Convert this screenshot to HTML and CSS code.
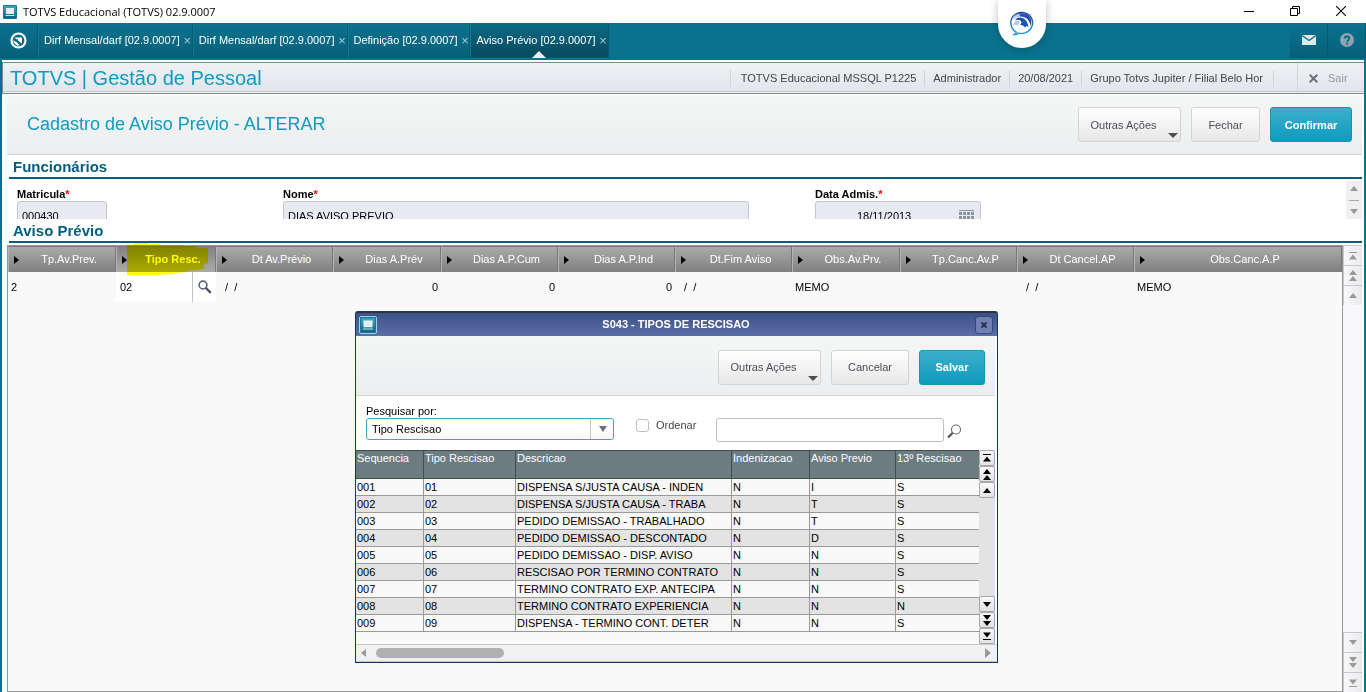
FILE: index.html
```html
<!DOCTYPE html>
<html lang="pt-BR">
<head>
<meta charset="utf-8">
<title>TOTVS Educacional (TOTVS) 02.9.0007</title>
<link rel="stylesheet" href="styles.css">
</head>
<body>
<svg class="defs" aria-hidden="true">
  <defs>
    <linearGradient id="g-app" x1="0" y1="0" x2="0" y2="1"><stop offset="0" stop-color="#3aa9c4"/><stop offset="1" stop-color="#0b6484"/></linearGradient>
    <linearGradient id="g-bubble" x1="0" y1="0" x2="0" y2="1"><stop offset="0" stop-color="#1b3c9c"/><stop offset="1" stop-color="#1aa7dc"/></linearGradient>
  </defs>
  <symbol id="app" viewBox="0 0 14 14"><rect x="0" y="0" width="14" height="14" rx="1" fill="#16799a"/><rect x="1" y="1" width="12" height="12" fill="url(#g-app)"/><rect x="3" y="3" width="8" height="6" fill="#e4edf2"/><path d="M2 11h10l-1-1H3z" fill="#cfe0e8"/></symbol>
  <symbol id="up" viewBox="0 0 8 5"><path d="M4 0l4 5H0z"/></symbol>
  <symbol id="down" viewBox="0 0 8 5"><path d="M4 5L0 0h8z"/></symbol>
  <symbol id="up2" viewBox="0 0 8 11"><path d="M4 0l4 5H0zM4 6l4 5H0z"/></symbol>
  <symbol id="down2" viewBox="0 0 8 11"><path d="M4 5L0 0h8zM4 11L0 6h8z"/></symbol>
  <symbol id="top" viewBox="0 0 8 8"><path d="M0 0h8v1H0zM4 2.500l4 5H0z"/></symbol>
  <symbol id="bottom" viewBox="0 0 8 8"><path d="M0 7h8v1H0zM4 5.500l-4-5h8z"/></symbol>
</svg>

<header class="titlebar">
  <svg class="app-icon"><use href="#app"/></svg>
  <span class="window-title">TOTVS Educacional (TOTVS) 02.9.0007</span>
  <div class="window-controls">
    <button type="button" aria-label="Minimizar"><svg width="10" height="10" viewBox="0 0 10 10"><path d="M0 5.500h10" stroke="#000"/></svg></button>
    <button type="button" aria-label="Restaurar"><svg width="10" height="10" viewBox="0 0 10 10"><path d="M.5 2.500h7v7h-7zM2.500 2.500v-2h7v7h-2" fill="none" stroke="#000"/></svg></button>
    <button type="button" aria-label="Fechar janela"><svg width="10" height="10" viewBox="0 0 10 10"><path d="M0 0l10 10M10 0L0 10" stroke="#000" stroke-width="1.100"/></svg></button>
  </div>
</header>

<nav class="tabbar">
  <a class="home" href="#" aria-label="Início"><svg width="17" height="17" viewBox="0 0 17 17"><circle cx="8.500" cy="8.500" r="7" fill="none" stroke="#fff" stroke-width="2.200"/><path d="M4.500 5.500h6.500c.7 0 1 .3 1 1v5.200L8 8.500V7.300H6.300zM3 8.200l3 1.600 4 3.500-2.500.5L4 11z" fill="#fff"/></svg></a>
  <div class="tab"><a href="#">Dirf Mensal/darf [02.9.0007]</a><button type="button" aria-label="Fechar aba">×</button></div>
  <div class="tab"><a href="#">Dirf Mensal/darf [02.9.0007]</a><button type="button" aria-label="Fechar aba">×</button></div>
  <div class="tab"><a href="#">Definição [02.9.0007]</a><button type="button" aria-label="Fechar aba">×</button></div>
  <div class="tab active"><a href="#">Aviso Prévio [02.9.0007]</a><button type="button" aria-label="Fechar aba">×</button></div>
  <div class="tab-tools">
    <button type="button" aria-label="Mensagens"><svg width="14" height="10" viewBox="0 0 14 10"><path d="M0 0h14v10H0z" fill="#dfeaee"/><path d="M0 .5l7 5 7-5" fill="none" stroke="#0a6b87" stroke-width="1.300"/></svg></button>
    <button type="button" aria-label="Ajuda"><svg width="14" height="14" viewBox="0 0 14 14"><circle cx="7" cy="7" r="7" fill="#8aa5b1"/><path d="M4.800 5.600c0-3 4.500-3 4.500-.3 0 1.500-2.100 1.700-2.100 3.400M7.100 9.700v1.700" fill="none" stroke="#07607a" stroke-width="1.700"/></svg></button>
  </div>
</nav>

<button type="button" class="assistant" aria-label="Assistente"><svg width="24" height="26" viewBox="0 0 26 27"><path d="M7 22.500C-1 18-.5 7.500 5 3.800 11-.8 19.500.8 23 6.500c4 7-.5 16.500-9.500 17.300-1.500.1-3 0-4.200-.4-1.500 1.300-3.500 1.700-5 1.600 1.200-.6 2.200-1.200 2.700-2.500z" fill="#fff" stroke="url(#g-bubble)" stroke-width="1.500"/><path d="M2.500 10C4 3.500 11 .8 17 2.700c5 1.700 7.400 6.800 5.400 13.300C21.500 9 16.500 4.500 10.500 5.300 7 5.800 4 7.800 2.500 10z" fill="#b8c4e6"/><path d="M10 2.200C17 .5 23 4 23 11l-.5 5C21.500 9 17 5 11 5.300z" fill="#2a4fb0"/><path d="M5.500 9c4-5 13-3 14.500 7.500-2-1.200-3-.6-4 .8-1-2-3-3-5.500-2.500 2.500-1.500 2.500-4.500-.5-5.500-1.500-.3-3-.8-4.500-.3z" fill="#1857ad"/><path d="M4 13c2-4 5-3.500 6-2.500 1 1.500-.5 3.500-2 4.300-1.500-.8-3-.8-4.500.7z" fill="#bac6e6"/></svg></button>

<div class="frame">
  <header class="module">
    <h1>TOTVS | Gestão de Pessoal</h1>
    <ul class="session">
      <li>TOTVS Educacional MSSQL P1225</li>
      <li>Administrador</li>
      <li>20/08/2021</li>
      <li>Grupo Totvs Jupiter / Filial Belo Hor</li>
    </ul>
    <a class="exit" href="#"><svg width="9" height="9" viewBox="0 0 9 9"><path d="M.7.7l7.600 7.600M8.300.7L.7 8.300" stroke="#67707f" stroke-width="2"/></svg>Sair</a>
  </header>

  <main class="page">
    <div class="toolbar page-toolbar">
      <h2>Cadastro de Aviso Prévio - ALTERAR</h2>
      <button type="button" class="btn menu">Outras Ações</button>
      <button type="button" class="btn close">Fechar</button>
      <button type="button" class="btn primary">Confirmar</button>
    </div>

    <section class="block">
      <h3>Funcionários</h3>
      <div class="employee">
        <form class="fields">
          <div class="field code"><label for="mat">Matricula<em>*</em></label><input id="mat" value="000430" readonly></div>
          <div class="field name"><label for="nome">Nome<em>*</em></label><input id="nome" value="DIAS AVISO PREVIO" readonly></div>
          <div class="field date"><label for="adm">Data Admis.<em>*</em></label><input id="adm" value="18/11/2013" readonly>
            <svg class="calendar" width="15" height="12" viewBox="0 0 15 12"><path d="M0 .5h15" stroke="#8a93a0"/><path d="M0 3.500h15M0 7.500h15M0 11.500h15" stroke="#8a93a0" stroke-width="3" stroke-dasharray="3 1"/></svg></div>
        </form>
        <div class="mini-scroll"><svg width="8" height="5"><use href="#up"/></svg><i></i><svg width="8" height="5"><use href="#down"/></svg></div>
      </div>
    </section>

    <section class="block grow">
      <h3>Aviso Prévio</h3>
      <div class="grid-area">
        <div class="grid">
          <table class="notice">
            <colgroup><col class="w108"><col class="w100"><col class="w117"><col class="w108"><col class="w117"><col class="w117"><col class="w117"><col class="w108"><col class="w117"><col class="w117"><col></colgroup>
            <thead><tr>
              <th>Tp.Av.Prev.</th>
              <th class="marked">Tipo Resc.<svg class="marker" width="82" height="32" viewBox="0 0 82 32"><path d="M0 2l8-1V0h13v1h12v1h24v1h12v2h12v15l-4 1v5l-17 2v1l-12 1v1l-21 1v1H0z" fill="#ff0"/></svg></th>
              <th>Dt Av.Prévio</th><th>Dias A.Prév</th><th>Dias A.P.Cum</th><th>Dias A.P.Ind</th><th>Dt.Fim Aviso</th><th>Obs.Av.Prv.</th><th>Tp.Canc.Av.P</th><th>Dt Cancel.AP</th><th>Obs.Canc.A.P</th>
            </tr></thead>
            <tbody><tr>
              <td>2</td>
              <td class="editing"><div class="lookup"><input value="02" aria-label="Tipo Resc."><button type="button" aria-label="Pesquisar"><svg width="14" height="14" viewBox="0 0 14 14"><circle cx="5" cy="5" r="3.900" fill="none" stroke="#5a6577" stroke-width="1.600"/><path d="M7.800 7.800l5 5" stroke="#4b5668" stroke-width="2.400"/></svg></button></div></td>
              <td class="date">/&nbsp; /</td><td class="num">0</td><td class="num">0</td><td class="num">0</td>
              <td class="date">/&nbsp; /</td><td>MEMO</td><td></td><td class="date">/&nbsp; /</td><td>MEMO</td>
            </tr></tbody>
          </table>
        </div>
        <div class="scroll">
          <button type="button" aria-label="Primeiro"><svg width="8" height="8"><use href="#top"/></svg></button>
          <button type="button" aria-label="Página anterior"><svg width="8" height="11"><use href="#up2"/></svg></button>
          <button type="button" aria-label="Anterior"><svg width="8" height="5"><use href="#up"/></svg></button>
          <span></span>
          <button type="button" aria-label="Próximo"><svg width="8" height="5"><use href="#down"/></svg></button>
          <button type="button" aria-label="Próxima página"><svg width="8" height="11"><use href="#down2"/></svg></button>
          <button type="button" aria-label="Último"><svg width="8" height="8"><use href="#bottom"/></svg></button>
        </div>
      </div>
    </section>
  </main>
</div>

<div class="dialog" role="dialog" aria-labelledby="dlg-title">
  <div class="dialog-title">
    <svg class="dialog-icon"><use href="#app"/></svg>
    <h2 id="dlg-title">S043 - TIPOS DE RESCISAO</h2>
    <button type="button" aria-label="Fechar"><svg width="6" height="6" viewBox="0 0 6 6"><path d="M.5.5l5 5M5.500.5l-5 5" stroke="#1d2748" stroke-width="1.700"/></svg></button>
  </div>
  <div class="toolbar dialog-toolbar">
    <button type="button" class="btn menu">Outras Ações</button>
    <button type="button" class="btn cancel">Cancelar</button>
    <button type="button" class="btn primary save">Salvar</button>
  </div>
  <form class="search">
    <div class="search-by">
      <label for="by">Pesquisar por:</label>
      <div class="select"><select id="by"><option>Tipo Rescisao</option></select><svg width="8" height="6" viewBox="0 0 8 6"><path d="M0 0h8L4 6z" fill="#67707f"/></svg></div>
    </div>
    <label class="order"><input type="checkbox">Ordenar</label>
    <input class="term" type="text" aria-label="Texto da pesquisa">
    <button type="button" class="go" aria-label="Pesquisar"><svg width="15" height="15" viewBox="0 0 15 15"><circle cx="9" cy="5.500" r="4.500" fill="none" stroke="#666" stroke-width="1.100"/><path d="M5.800 8.700L1 13.500" stroke="#555" stroke-width="2.200"/></svg></button>
  </form>
  <div class="results">
    <div class="results-grid">
      <table>
        <colgroup><col class="r1"><col class="r2"><col class="r3"><col class="r4"><col class="r5"><col></colgroup>
        <thead><tr><th>Sequencia</th><th>Tipo Rescisao</th><th>Descricao</th><th>Indenizacao</th><th>Aviso Previo</th><th>13º Rescisao</th></tr></thead>
        <tbody>
          <tr><td>001</td><td>01</td><td>DISPENSA S/JUSTA CAUSA - INDEN</td><td>N</td><td>I</td><td>S</td></tr>
          <tr><td>002</td><td>02</td><td>DISPENSA S/JUSTA CAUSA - TRABA</td><td>N</td><td>T</td><td>S</td></tr>
          <tr><td>003</td><td>03</td><td>PEDIDO DEMISSAO - TRABALHADO</td><td>N</td><td>T</td><td>S</td></tr>
          <tr><td>004</td><td>04</td><td>PEDIDO DEMISSAO - DESCONTADO</td><td>N</td><td>D</td><td>S</td></tr>
          <tr><td>005</td><td>05</td><td>PEDIDO DEMISSAO - DISP. AVISO</td><td>N</td><td>N</td><td>S</td></tr>
          <tr><td>006</td><td>06</td><td>RESCISAO POR TERMINO CONTRATO</td><td>N</td><td>N</td><td>S</td></tr>
          <tr><td>007</td><td>07</td><td>TERMINO CONTRATO EXP. ANTECIPA</td><td>N</td><td>N</td><td>S</td></tr>
          <tr><td>008</td><td>08</td><td>TERMINO CONTRATO EXPERIENCIA</td><td>N</td><td>N</td><td>N</td></tr>
          <tr><td>009</td><td>09</td><td>DISPENSA - TERMINO CONT. DETER</td><td>N</td><td>N</td><td>S</td></tr>
        </tbody>
      </table>
    </div>
    <div class="scroll dark">
      <button type="button" aria-label="Primeiro"><svg width="8" height="8"><use href="#top"/></svg></button>
      <button type="button" aria-label="Página anterior"><svg width="8" height="11"><use href="#up2"/></svg></button>
      <button type="button" aria-label="Anterior"><svg width="8" height="5"><use href="#up"/></svg></button>
      <span></span>
      <button type="button" aria-label="Próximo"><svg width="8" height="5"><use href="#down"/></svg></button>
      <button type="button" aria-label="Próxima página"><svg width="8" height="11"><use href="#down2"/></svg></button>
      <button type="button" aria-label="Último"><svg width="8" height="8"><use href="#bottom"/></svg></button>
    </div>
  </div>
  <div class="hscroll">
    <svg width="5" height="8" viewBox="0 0 5 8"><path d="M5 0v8L0 4z"/></svg>
    <i></i>
    <svg width="6" height="10" viewBox="0 0 6 10"><path d="M0 0v10l6-5z"/></svg>
  </div>
</div>
</body>
</html>
```

FILE: styles.css
```css
:root {
  --teal: #0a728e;
  --accent: #0f9bc0;
  --rule: #005f7f;
}
* { box-sizing: border-box; }
body {
  margin: 0;
  height: 100vh;
  display: flex;
  flex-direction: column;
  overflow: hidden;
  position: relative;
  background: #fff;
  font: 11px/13px "Liberation Sans", Arial, sans-serif;
  color: #000;
}
h1, h2, h3, ul { margin: 0; padding: 0; font-weight: normal; }
button, input, select { font: inherit; color: inherit; margin: 0; padding: 0; border: 0; background: none; }
a { color: inherit; text-decoration: none; }
svg { display: block; flex: none; }
.defs { position: absolute; width: 0; height: 0; }

/* window title */
.titlebar { flex: none; height: 23px; display: flex; align-items: center; padding: 0 2px 0 3px; }
.app-icon { width: 14px; height: 14px; }
.window-title { margin-left: 6px; font: 11px/16px "Open Sans", "Noto Sans", sans-serif; }
.window-controls { margin-left: auto; display: flex; height: 21px; align-self: flex-start; }
.window-controls button { width: 46px; display: flex; align-items: center; justify-content: center; }

/* open routines */
.tabbar { flex: none; height: 37px; display: flex; align-items: flex-start; background: var(--teal); color: #fff; }
.home, .tab, .tab-tools button {
  height: 35px;
  display: flex;
  align-items: center;
  background: linear-gradient(#0b738f, #07607a);
  border: solid #065a72;
  border-width: 0 1px 1px 0;
}
.home { width: 38px; justify-content: center; }
.tab { padding-left: 5px; position: relative; border-left: 1px solid #0d7997; }
.tab button { margin-left: 3px; width: 9px; font-size: 13px; color: #a9cbd6; text-align: center; }
.tab.active { background: linear-gradient(#0a6b86, #07495c); }
.tab.active::after {
  content: "";
  position: absolute;
  left: 50%;
  bottom: -1px;
  margin-left: -7px;
  border: solid transparent;
  border-width: 0 7px 7px;
  border-bottom-color: #eef1f3;
}
.tab-tools { margin-left: auto; display: flex; }
.tab-tools button { width: 38px; justify-content: center; }

.assistant {
  position: absolute;
  top: 0;
  right: 320px;
  width: 48px;
  height: 48px;
  padding: 0;
  display: flex;
  align-items: center;
  justify-content: center;
  border-radius: 0 0 24px 24px;
  background: #fff;
  box-shadow: 0 1px 8px rgba(0, 0, 0, .25);
  clip-path: inset(0 -12px -12px -12px);
}

/* module header */
.frame { flex: 1; min-height: 0; display: flex; flex-direction: column; padding-top: 2px; border: solid var(--teal); border-width: 0 2px; }
.module {
  flex: none;
  height: 32px;
  display: flex;
  align-items: center;
  border: solid #858585;
  border-width: 1px 0 1px 1px;
  background: linear-gradient(#eff1f3, #e1e5eb);
  box-shadow: inset 0 -1px #eef0f2, inset 0 -2px #c6cacd;
  color: #444;
}
.module h1 { margin-left: 7px; font-size: 20px; line-height: 28px; color: var(--accent); }
.session { margin-left: auto; display: flex; list-style: none; }
.session li { padding: 2px 8px; border-left: 1px solid #d3d5d6; }
.session li:first-child { padding-left: 10px; }
.session li:last-child { padding-right: 10px; border-right: 1px solid #d3d5d6; }
.exit { align-self: stretch; margin-left: 23px; width: 67px; padding-left: 11px; display: flex; align-items: center; gap: 10px; border-left: 1px solid #d3d5d6; color: #9298a3; }

/* page */
.page { flex: 1; min-height: 0; display: flex; flex-direction: column; padding: 1px 2px 0 5px; }
.toolbar { flex: none; display: flex; align-items: center; gap: 10px; height: 60px; padding: 0 10px; background: linear-gradient(#f5f7f6, #ecedef); border-bottom: 1px solid #d5d6d8; }
.toolbar h2 { margin-right: auto; padding-left: 10px; font-size: 18px; line-height: 22px; padding-bottom: 2px; color: var(--accent); }
.btn { height: 35px; padding-top: 1px; border: 1px solid #d2d3d5; border-radius: 3px; background: linear-gradient(#fff, #e7e7e8); color: #4a4f5a; }
.btn.menu { width: 103px; padding-right: 12px; position: relative; }
.btn.menu::after { content: ""; position: absolute; right: 2px; bottom: 3px; border: solid transparent; border-width: 5px 5px 0; border-top-color: #474f5b; }
.btn.close { width: 69px; }
.btn.cancel { width: 78px; }
.btn.primary { width: 82px; border-color: #1a93b3; background: linear-gradient(#3cafcb, #0f9bc0); color: #fff; font-weight: bold; }
.btn.save { width: 66px; }

.block { flex: none; padding-left: 2px; }
.block h3 { height: 24px; padding-left: 4px; font-size: 15px; line-height: 24px; font-weight: bold; color: var(--rule); border-bottom: 2px solid var(--rule); }
.employee { display: flex; align-items: flex-end; height: 40px; overflow: hidden; }
.fields { flex: 1; align-self: flex-start; display: grid; grid-template-columns: 266px 532px 1fr; padding: 9px 0 0 8px; }
.field { position: relative; }
.field label { display: block; font-weight: bold; }
.field em { color: #f00; font-style: normal; }
.field input { display: block; height: 28px; padding: 1px 4px 0; border: 1px solid #c3c6ca; border-radius: 3px; background: #e7eaf2; }
.code input { width: 90px; }
.name input { width: 466px; }
.date input { width: 166px; padding-left: 41px; }
.calendar { position: absolute; left: 144px; top: 22px; }
.mini-scroll { width: 16px; height: 38px; display: flex; flex-direction: column; align-items: center; justify-content: space-between; padding: 5px 0; background: #f0f0f0; fill: #999; }
.mini-scroll i { width: 10px; height: 1px; background: #aaa; }

/* notice grid */
.grow { flex: 1; min-height: 0; display: flex; flex-direction: column; padding: 0; }
.grow h3 { flex: none; margin-left: 2px; }
.grid-area { flex: 1; min-height: 0; display: flex; padding-top: 2px; }
.grid { flex: 1; min-width: 0; background: #f9f9f9; border: 1px solid #999; }
table { width: 100%; table-layout: fixed; border-collapse: separate; border-spacing: 0; }
th, td { padding: 0; text-align: left; font-weight: normal; white-space: nowrap; }
.w100 { width: 100px; }
.w108 { width: 108px; }
.w117 { width: 117px; }
.notice th { position: relative; height: 26px; padding-left: 14px; text-align: center; color: #fff; background: linear-gradient(#aaa, #808080); border: solid #777; border-width: 1px 1px 0 0; border-left: 1px solid #b4b4b4; }
.notice th::before { content: ""; position: absolute; left: 5px; top: 9px; border: solid transparent; border-width: 4px 0 4px 5px; border-left-color: #000; }
.notice th.marked { font-weight: bold; background: linear-gradient(#838383, #aaa); }
.marker { position: absolute; left: 10px; top: -4px; mix-blend-mode: multiply; }
.notice td { height: 30px; padding: 0 3px; }
.notice td.date { padding-left: 9px; }
.notice td.num { text-align: right; }
.notice td.editing { padding: 0; background: #fff; }
.lookup { display: flex; height: 30px; }
.lookup input { flex: 1; min-width: 0; padding: 1px 4px 0; border-right: 1px solid #c0c0c0; }
.lookup button { width: 23px; display: flex; align-items: center; justify-content: center; }

.scroll { flex: none; width: 19px; display: flex; flex-direction: column; background: #f8f8fa; fill: #999; }
.scroll button { flex: none; height: 20px; display: flex; align-items: center; justify-content: center; border: solid #c8c8ca; border-width: 1px 0 0 1px; background: linear-gradient(90deg, #f8f8fa, #e9eaec); }
.scroll span { flex: 1; }

/* lookup dialog */
.dialog { position: absolute; left: 355px; top: 311px; width: 643px; background: #fff; border: 1px solid #0a3a68; border-top: 2px solid #2b3442; border-radius: 3px 3px 0 0; }
.dialog-title { height: 23px; display: flex; align-items: center; padding: 0 4px 0 3px; background: linear-gradient(#3d5189, #5b6ea6); color: #fff; }
.dialog-icon { width: 18px; height: 18px; border: 1px solid #9fd0de; border-radius: 2px; }
.dialog-title h2 { flex: 1; text-align: center; font-size: 11px; font-weight: bold; }
.dialog-title button { width: 18px; height: 18px; display: flex; align-items: center; justify-content: center; border: 1px solid #37497c; border-radius: 3px; background: #7080b0; }
.dialog-toolbar { justify-content: flex-end; margin-right: 2px; padding-top: 3px; }
.search { display: flex; align-items: flex-start; height: 54px; padding: 9px 10px 0; }
.search-by { width: 248px; }
.search-by label { display: block; line-height: 13px; }
.select { position: relative; height: 22px; display: flex; border: 1px solid #39a9c6; border-radius: 3px; }
.select select { flex: 1; appearance: none; padding-left: 5px; }
.select svg { position: absolute; right: 6px; top: 7px; }
.select::after { content: ""; position: absolute; right: 22px; top: 0; bottom: 0; border-left: 1px solid #c4c6c8; }
.order { display: flex; align-items: center; gap: 7px; margin: 14px 0 0 22px; color: #444; }
.order input { appearance: none; width: 13px; height: 13px; border: 1px solid #bfc0c2; border-radius: 3px; background: #fff; }
.term { width: 228px; height: 24px; margin: 13px 0 0 20px; padding: 0 5px; border: 1px solid #bdbfc1; border-radius: 3px; }
.go { margin: 19px 0 0 3px; }
.results { display: flex; height: 194px; margin-right: 2px; }
.results-grid { flex: 1; min-width: 0; background: #f9f9f9; }
.r1 { width: 68px; }
.r2 { width: 92px; }
.r3 { width: 216px; }
.r4 { width: 78px; }
.r5 { width: 86px; }
.results th { height: 29px; padding: 1px 1px 0; vertical-align: top; color: #fff; background: #6d7c81; border: solid #454c50; border-width: 1px 1px 1px 0; }
.results td { height: 17px; padding: 0 1px; line-height: 16px; border: solid #999; border-width: 0 1px 1px 0; }
.results th:last-child, .results td:last-child { border-right: 0; }
.results tbody tr:nth-child(even) { background: #e3e3e3; }
.dark { width: 16px; background: #e3e3e3; fill: #000; }
.dark button { height: 16px; border: 1px solid #a8a8a8; border-radius: 2px; background: linear-gradient(#fafafa, #e2e2e2); }
.hscroll { display: flex; align-items: center; height: 18px; padding: 0 6px 0 5px; background: #f1f1f1; border: solid #c6c8c9; border-width: 1px 0; fill: #999; }
.hscroll i { width: 128px; height: 10px; margin: 0 auto 0 10px; border-radius: 5px; background: #b1b1b1; }
```
